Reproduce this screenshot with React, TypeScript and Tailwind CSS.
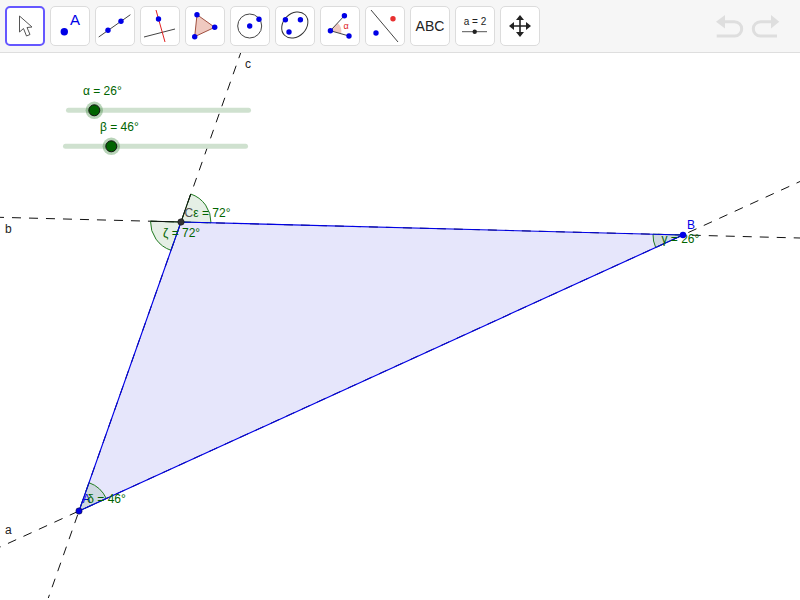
import React from 'react';

const BLUE = '#0000e6';
const Dot = ({ x, y, r = 2.7, c = BLUE }: { x: number; y: number; r?: number; c?: string }) => (
    <circle cx={x} cy={y} r={r} fill={c} />
);

// Toolbar icons, drawn in the 40x40 box of each button
const icons: React.ReactNode[] = [
    <path key="move" d="M14.500 10 L14.500 26 L18.500 22.500 L21.500 30 L25 28.500 L22 21.500 L27 21 Z" fill="#fff" stroke="#555" strokeWidth={1} strokeLinejoin="round" />,
    <g key="point">
        <circle cx={14.300} cy={25.700} r={3.700} fill={BLUE} />
        <text x={20} y={19.300} fontSize={15} fill={BLUE} className="font-['Liberation_Sans']">A</text>
    </g>,
    <g key="line">
        <line x1={3.700} y1={31} x2={35.400} y2={8.700} stroke="#444" strokeWidth={1} />
        <Dot x={13} y={24.300} />
        <Dot x={26} y={15.300} />
    </g>,
    <g key="perp">
        <line x1={4} y1={31} x2={35} y2={23} stroke="#444" strokeWidth={1} />
        <line x1={16} y1={4} x2={25} y2={36} stroke="#e02020" strokeWidth={1} />
        <Dot x={18.500} y={13} />
    </g>,
    <g key="polygon">
        <path d="M12 8.700 L29.700 21.300 L9.700 30.700 Z" fill="#efc9c0" stroke="#a05040" strokeWidth={1} />
        <Dot x={12} y={8.700} />
        <Dot x={29.700} y={21.300} />
        <Dot x={9.700} y={30.700} />
    </g>,
    <g key="circle">
        <circle cx={19.700} cy={20} r={12} fill="none" stroke="#444" strokeWidth={1} />
        <Dot x={19.700} y={20} />
        <Dot x={29} y={13.300} />
    </g>,
    <g key="conic">
        <ellipse cx={19.800} cy={19} rx={14.500} ry={11.500} transform="rotate(-45 19.800 19)" fill="none" stroke="#333" strokeWidth={1} />
        <Dot x={10.400} y={13.700} />
        <Dot x={25.400} y={13.700} />
        <Dot x={14} y={26} />
    </g>,
    <g key="angle">
        <path d="M10.400 24.700 L17.800 17 A11 11 0 0 1 21 27.600 Z" fill="#efc9c0" />
        <path d="M24.400 9.700 L10.400 24.700 L29 30" fill="none" stroke="#444" strokeWidth={1} />
        <Dot x={24.400} y={9.700} />
        <Dot x={10.400} y={24.700} />
        <Dot x={29} y={30} />
        <text x={23.500} y={22.500} fontSize={9} fill="#e02020" className="font-['Liberation_Sans']">α</text>
    </g>,
    <g key="reflect">
        <line x1={6} y1={4} x2={33} y2={36} stroke="#444" strokeWidth={1} />
        <Dot x={28} y={12.700} c="#e83030" />
        <Dot x={11} y={27} />
    </g>,
    <text key="abc" x={20} y={25.300} fontSize={14} textAnchor="middle" fill="#222" className="font-['Liberation_Sans']">ABC</text>,
    <g key="slider">
        <text x={20} y={18.800} fontSize={10} textAnchor="middle" fill="#222" className="font-['Liberation_Sans']">a = 2</text>
        <line x1={7} y1={25.700} x2={32} y2={25.700} stroke="#555" strokeWidth={1} />
        <circle cx={19.700} cy={25.700} r={2.200} fill="#222" />
    </g>,
    <path key="pan" d="M20 9 L24 14 L20.800 14 L20.800 19.200 L26 19.200 L26 16 L31 20 L26 24 L26 20.800 L20.800 20.800 L20.800 26 L24 26 L20 31 L16 26 L19.200 26 L19.200 20.800 L14 20.800 L14 24 L9 20 L14 16 L14 19.200 L19.200 19.200 L19.200 14 L16 14 Z" fill="#222" />
];

const ToolButton = ({ active, children }: { active?: boolean; children: React.ReactNode }) => (
    <button
        className={`w-10 h-10 shrink-0 bg-white rounded-[5px] ${active ? 'border-2 border-[#6557ff]' : 'border border-[#dcdcdc]'}`}
    >
        <svg width="40" height="40" viewBox="0 0 40 40" className={active ? '-m-0.5' : '-m-px'}>
            {children}
        </svg>
    </button>
);

const GREEN = '#006400';
const angles = [
    'M181 222 L190.700 194 A29.700 29.700 0 0 1 211 222.800 Z',
    'M181 222 L150.500 221.200 A30 30 0 0 0 171 250.300 Z',
    'M683 235 L653 234.200 A30 30 0 0 0 655.700 247.500 Z',
    'M79 511 L106.300 498.500 A30 30 0 0 0 89 482.700 Z'
];

const labels = [
    { x: 83, y: 94.500, t: 'α = 26°', c: GREEN },
    { x: 100, y: 131, t: 'β = 46°', c: GREEN },
    { x: 245, y: 68, t: 'c', c: '#222' },
    { x: 5, y: 233, t: 'b', c: '#222' },
    { x: 5, y: 534, t: 'a', c: '#222' },
    { x: 184.500, y: 216.700, t: 'C', c: '#555' },
    { x: 193.300, y: 216.700, t: 'ε = 72°', c: GREEN },
    { x: 163, y: 236.700, t: 'ζ = 72°', c: GREEN },
    { x: 687, y: 229, t: 'B', c: BLUE },
    { x: 661.500, y: 242.500, t: 'γ = 26°', c: GREEN },
    { x: 82.500, y: 503, t: 'A', c: BLUE },
    { x: 87.300, y: 502.700, t: 'δ = 46°', c: GREEN }
];

const Slider = ({ x1, x2, y, at }: { x1: number; x2: number; y: number; at: number }) => (
    <g>
        <line x1={x1} y1={y} x2={x2} y2={y} stroke="#cfe1cf" strokeWidth={5} strokeLinecap="round" />
        <circle cx={at} cy={y} r={8.700} fill="#006400" opacity={0.28} />
        <circle cx={at} cy={y} r={5.500} fill={GREEN} stroke="#111" strokeWidth={1} />
    </g>
);

export default function App() {
    return (
        <div className="w-[800px] h-[600px] flex flex-col bg-white overflow-hidden">
            {/* Toolbar */}
            <div className="h-[53px] shrink-0 flex items-start justify-between pt-1.5 pl-[5px] pr-5 bg-[#f6f6f6] border-b border-[#dedede]">
                <div className="flex gap-[5px]">
                    {icons.map((icon, i) => (
                        <ToolButton key={i} active={i === 0}>{icon}</ToolButton>
                    ))}
                </div>
                <svg width="64" height="40" viewBox="0 0 64 40" className="text-[#dedede]">
                    <path d="M8 15.700 L18.500 15.700 A7.200 7.200 0 0 1 18.500 30.100 L0.700 30.100" fill="none" stroke="currentColor" strokeWidth={3} />
                    <path d="M0 15.700 L9 9 L9 22.400 Z" fill="currentColor" />
                    <path d="M56 15.700 L44.500 15.700 A7.200 7.200 0 0 0 44.500 30.100 L61 30.100" fill="none" stroke="currentColor" strokeWidth={3} />
                    <path d="M63.300 15.700 L55 9 L55 22.400 Z" fill="currentColor" />
                </svg>
            </div>

            {/* Drawing area */}
            <div className="flex-1 min-h-0">
                <svg width="800" height="547" viewBox="0 53 800 547" className="block">
                    <path d="M181 222 L683 235 L79 511 Z" fill="#e6e6fb" />
                    <g stroke="#111" strokeWidth={1} strokeDasharray="9 8" fill="none">
                        <line x1={-7.500} y1={550.500} x2={800} y2={181.500} />
                        <line x1={-5} y1={217.200} x2={800} y2={238} />
                        <line x1={241.800} y1={49.700} x2={48.300} y2={598} />
                    </g>
                    {angles.map((d, i) => (
                        <path key={i} d={d} fill="#006400" fillOpacity={0.1} stroke="#1f7a1f" strokeWidth={1} />
                    ))}
                    <path d="M181 222 L190.700 194 M181 222 L150.500 221.200" stroke="#111" strokeWidth={1} fill="none" />
                    <path d="M181 222 L683 235 L79 511 Z" fill="none" stroke={BLUE} strokeWidth={1.150} />
                    <Slider x1={68.500} x2={248.500} y={110.300} at={94.300} />
                    <Slider x1={65.500} x2={245.500} y={146.300} at={111.300} />
                    {labels.map((l) => (
                        <text key={l.t} x={l.x} y={l.y} fontSize={12} fill={l.c} className="font-['Liberation_Sans']">{l.t}</text>
                    ))}
                    <circle cx={181} cy={222} r={3.200} fill="#333" stroke="#111" strokeWidth={0.5} />
                    <circle cx={683} cy={235} r={3.200} fill={BLUE} />
                    <circle cx={79} cy={511} r={3.200} fill={BLUE} stroke="#111" strokeWidth={0.5} />
                </svg>
            </div>
        </div>
    );
}
